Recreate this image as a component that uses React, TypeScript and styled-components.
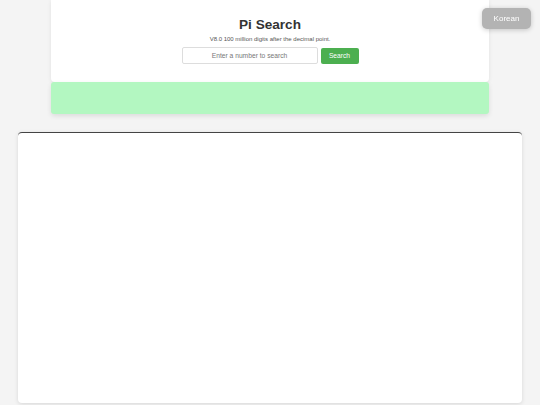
import React, { useState } from "react";
import styled, { createGlobalStyle } from "styled-components";

const GlobalStyle = createGlobalStyle`
  html, body {
    margin: 0;
    padding: 0;
    background: #f4f4f4;
    font-family: "Liberation Sans", Arial, sans-serif;
    color: #333;
  }
  * {
    box-sizing: border-box;
  }
`;

export default function App() {
  const [query, setQuery] = useState("");

  return (
    <>
      <GlobalStyle />
      <LangButton>Korean</LangButton>
      <Page>
        <Container>
          <Header>
            <Title>Pi Search</Title>
            <Subtitle>V8.0 100 million digits after the decimal point.</Subtitle>
            <SearchForm onSubmit={(e) => e.preventDefault()}>
              <SearchInput
                value={query}
                onChange={(e) => setQuery(e.target.value)}
                placeholder="Enter a number to search"
              />
              <SearchButton type="submit">Search</SearchButton>
            </SearchForm>
          </Header>
          <ResultBox />
        </Container>
        <DigitsPanel />
      </Page>
    </>
  );
}

const Page = styled.div`
  display: flex;
  flex-direction: column;
  align-items: center;
  gap: 18px;
  padding-bottom: 2px;
`;

const Container = styled.div`
  width: 438px;
  display: flex;
  flex-direction: column;
`;

const Header = styled.div`
  height: 82px;
  background: #fff;
  border-radius: 0 0 4px 4px;
  box-shadow: 0 1px 4px rgba(0, 0, 0, 0.08);
  display: flex;
  flex-direction: column;
  align-items: center;
  padding-top: 16px;
`;

const Title = styled.h1`
  margin: 0;
  font-size: 13.6px;
  line-height: 18px;
  font-weight: bold;
  color: #333;
`;

const Subtitle = styled.p`
  margin: 1px 0 0;
  font-size: 6px;
  line-height: 8px;
  color: #555;
`;

const SearchForm = styled.form`
  display: flex;
  align-items: center;
  gap: 3px;
  margin-top: 4px;
`;

const SearchInput = styled.input`
  width: 136px;
  height: 17px;
  border: 1px solid #ddd;
  border-radius: 2px;
  padding: 0 4px;
  font-family: inherit;
  font-size: 6.7px;
  text-align: center;
  color: #333;
  outline: none;

  &::placeholder {
    color: #777;
  }
`;

const SearchButton = styled.button`
  width: 38px;
  height: 16px;
  border: none;
  border-radius: 2px;
  background: #4caf50;
  color: #fff;
  font-family: inherit;
  font-size: 6.7px;
  padding: 0;
  cursor: pointer;
`;

const ResultBox = styled.div`
  height: 32px;
  background: #b3f7c1;
  border-radius: 3px;
  box-shadow: 0 2px 5px rgba(0, 0, 0, 0.1);
`;

const DigitsPanel = styled.div`
  width: 504px;
  height: 271px;
  background: #fff;
  border-top: 1px solid #444;
  border-radius: 4px;
  box-shadow: 0 1px 4px rgba(0, 0, 0, 0.12);
`;

const LangButton = styled.button`
  position: fixed;
  top: 8px;
  right: 9px;
  width: 49px;
  height: 21px;
  border: none;
  border-radius: 5px;
  background: #b3b3b3;
  color: #fff;
  font-family: "Liberation Sans", Arial, sans-serif;
  font-size: 8px;
  padding: 0;
  box-shadow: 0 1px 5px rgba(0, 0, 0, 0.2);
  cursor: pointer;
  z-index: 10;
`;
